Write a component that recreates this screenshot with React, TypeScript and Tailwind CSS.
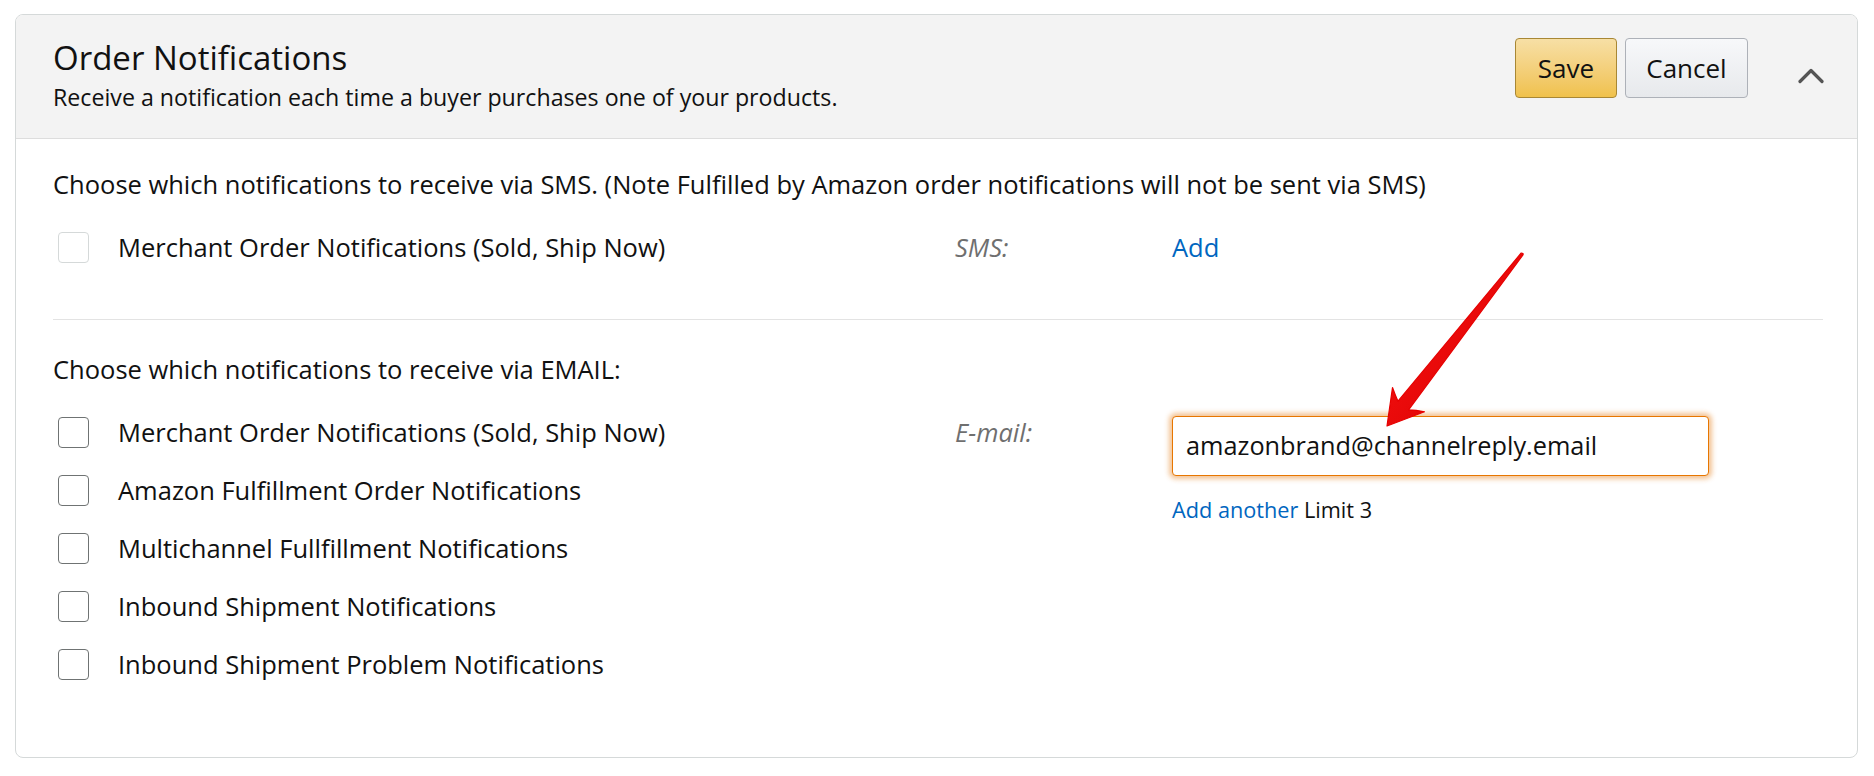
const EMAIL_OPTIONS = [
  'Merchant Order Notifications (Sold, Ship Now)',
  'Amazon Fulfillment Order Notifications',
  'Multichannel Fullfillment Notifications',
  'Inbound Shipment Notifications',
  'Inbound Shipment Problem Notifications',
];

function Checkbox({ disabled }: { disabled?: boolean }) {
  return (
    <span
      className={
        disabled
          ? 'h-[31px] w-[31px] shrink-0 rounded-[4px] border-[1.5px] border-[#d5d9d9] bg-white'
          : 'h-[31px] w-[31px] shrink-0 rounded-[4px] border-[1.5px] border-[#6f7373] bg-white'
      }
    />
  );
}

function RedArrow() {
  return (
    <svg
      className="pointer-events-none absolute left-[1364px] top-[230px]"
      width="150"
      height="190"
      viewBox="0 0 150 190"
    >
      <defs>
        <linearGradient id="arrowShade" x1="0" y1="0" x2="1" y2="1">
          <stop offset="0" stopColor="#ff1414" />
          <stop offset="1" stopColor="#d40000" />
        </linearGradient>
      </defs>
      <path
        d="M7 181 L12.5 142.5 Q15.5 151 18 156.2 L141 8.2 Q143.8 8 143 9.8 L28.6 164.8 Q36 165 44.5 166.8 Z"
        fill="url(#arrowShade)"
        stroke="#e60000"
        strokeWidth="1.2"
        strokeLinejoin="round"
      />
    </svg>
  );
}

export default function App() {
  return (
    <div
      className="min-h-screen bg-white pl-[15px] pt-[14px] text-[#111111]"
      style={{ fontFamily: '"Open Sans", "Noto Sans", Arial, sans-serif' }}
    >
      <div className="relative h-[744px] w-[1843px] overflow-hidden rounded-[8px] border border-[#d5d9d9]">
        <div className="flex h-[124px] items-start justify-between border-b border-[#dddddd] bg-[#f3f3f3] pl-[37px] pr-[33px]">
          <div className="pt-[25px]">
            <h2 className="text-[33px] leading-[36px] font-normal">Order Notifications</h2>
            <p className="mt-[7px] text-[23.2px] leading-[28px]">
              Receive a notification each time a buyer purchases one of your products.
            </p>
          </div>
          <div className="flex items-start">
            <button
              type="button"
              className="mt-[23px] h-[60px] w-[102px] rounded-[4px] border border-[#a88734] bg-gradient-to-b from-[#f7dfa5] to-[#f0c14b] text-[26px]"
            >
              Save
            </button>
            <button
              type="button"
              className="ml-[8px] mt-[23px] h-[60px] w-[123px] rounded-[4px] border border-[#adb1b8] bg-gradient-to-b from-[#f7f8fa] to-[#e7e9ec] text-[26px]"
            >
              Cancel
            </button>
            <svg className="ml-[50px] mt-[52px]" width="26" height="17" viewBox="0 0 26 17">
              <polyline
                points="2,14.5 13,3.5 24,14.5"
                fill="none"
                stroke="#555555"
                strokeWidth="3.2"
                strokeLinecap="round"
                strokeLinejoin="round"
              />
            </svg>
          </div>
        </div>

        <div className="pl-[37px] pr-[34px] pt-[30px]">
          <p className="text-[25.5px] leading-[30px]">
            Choose which notifications to receive via SMS. (Note Fulfilled by Amazon order notifications will not be sent via SMS)
          </p>
          <div className="mt-[33px] flex h-[31px] items-center">
            <div className="flex w-[902px] items-center gap-[29px] pl-[5px]">
              <Checkbox disabled />
              <span className="text-[25.5px]">Merchant Order Notifications (Sold, Ship Now)</span>
            </div>
            <span className="w-[217px] text-[25.5px] italic text-[#6f6f6f]">SMS:</span>
            <a className="text-[25.5px] text-[#0066c0]">Add</a>
          </div>

          <div className="mt-[56px] h-px bg-[#e3e3e3]" />

          <p className="mt-[34px] text-[25.5px] leading-[30px]">Choose which notifications to receive via EMAIL:</p>
          <div className="mt-[33px] flex items-start">
            <div className="flex w-[902px] flex-col gap-[27px] pl-[5px]">
              {EMAIL_OPTIONS.map(option => (
                <div key={option} className="flex h-[31px] items-center gap-[29px]">
                  <Checkbox />
                  <span className="text-[25.5px]">{option}</span>
                </div>
              ))}
            </div>
            <span className="w-[217px] text-[25.5px] leading-[31px] italic text-[#6f6f6f]">E-mail:</span>
            <div className="-mt-px flex flex-col">
              <div className="flex h-[60px] w-[537px] items-center rounded-[4px] border-[1.5px] border-[#e77600] bg-white pl-[13px] text-[25.3px] shadow-[0_0_5px_3px_rgba(228,121,17,0.45)]">
                amazonbrand@channelreply.email
              </div>
              <p className="mt-[20px] text-[21.7px] leading-[28px]">
                <a className="text-[#0066c0]">Add another</a> Limit 3
              </p>
            </div>
          </div>
        </div>

        <RedArrow />
      </div>
    </div>
  );
}
